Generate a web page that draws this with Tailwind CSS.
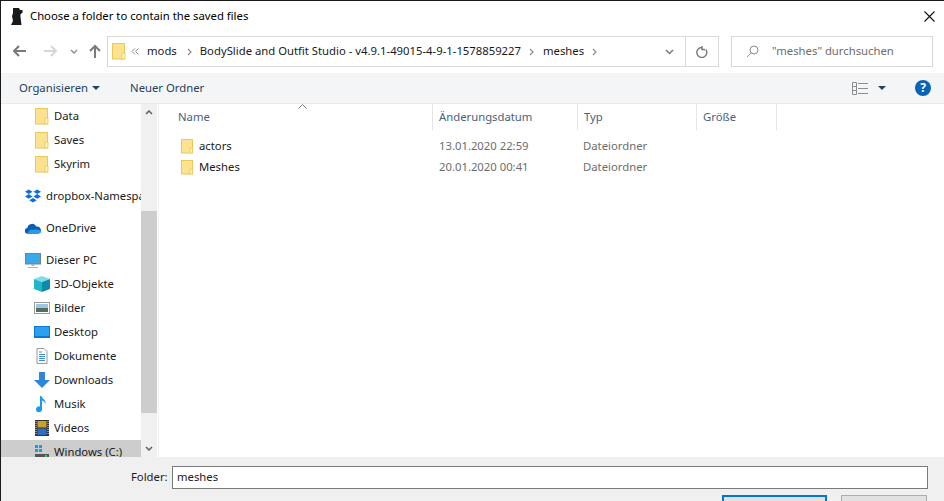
<!DOCTYPE html>
<html lang="de">
<head>
  <meta charset="UTF-8" />
  <title>Choose a folder</title>
  <script src="https://cdn.jsdelivr.net/npm/@tailwindcss/browser@4"></script>
</head>
<body class="w-[944px] h-[501px] overflow-hidden bg-white">
  <div class="w-[944px] h-[501px] flex flex-col overflow-hidden border-t border-l border-[#1a1a1a] text-[11.3px] text-[#1a1a1a] font-['Noto_Sans','Open_Sans',sans-serif]">

    <!-- TITLE BAR -->
    <div class="h-[31px] shrink-0 flex items-center pl-[10px] pr-[8px] pb-[1px]">
      <svg width="12" height="17" viewBox="0 0 12 17" class="shrink-0"><path d="M2 0h6l1 2h2.500v3L9.500 6v3l1 8H0l2-4-1-5 1-3z" fill="#1a1a1a"/></svg>
      <span class="ml-[7px] text-[#000]">Choose a folder to contain the saved files</span>
      <svg width="11" height="11" viewBox="0 0 11 11" class="ml-auto mr-[1px]"><path d="M.5.500l10 10M10.500.500l-10 10" stroke="#111" stroke-width="1.100"/></svg>
    </div>

    <!-- ADDRESS ROW -->
    <div class="h-[41px] shrink-0 flex items-start pt-[4px] bg-white">
      <div class="w-[106px] h-[30px] shrink-0 flex items-center">
        <svg width="14" height="12" viewBox="0 0 14 12" class="ml-[12px]"><path d="M1 6h12M6 1L1 6l5 5" fill="none" stroke="#7a7a7a" stroke-width="2"/></svg>
        <svg width="14" height="12" viewBox="0 0 14 12" class="ml-[16px]"><path d="M13 6H1M8 1l5 5-5 5" fill="none" stroke="#d6d6d6" stroke-width="2"/></svg>
        <svg width="8" height="5" viewBox="0 0 8 5" class="ml-[13px]"><path d="M1 1l3 3 3-3" fill="none" stroke="#8a8a8a" stroke-width="1.300"/></svg>
        <svg width="12" height="14" viewBox="0 0 12 14" class="ml-[11px]"><path d="M6 14V2M1 7l5-5 5 5" fill="none" stroke="#7a7a7a" stroke-width="2"/></svg>
      </div>
      <div class="w-[612px] h-[31px] shrink-0 flex items-center border border-[#d9d9d9]">
        <svg width="14" height="17" viewBox="0 0 14 17" class="ml-[4px] shrink-0"><rect x=".5" y=".5" width="12" height="15.500" fill="#fde28f" stroke="#eac85a"/><rect x="10" y="10" width="3" height="6" fill="#fff3c4" stroke="#eac85a" stroke-width=".8"/></svg>
        <svg width="8" height="7" viewBox="0 0 8 7" class="ml-[5px] shrink-0"><path d="M4 .5L1 3.500l3 3M7.500 .5l-3 3 3 3" fill="none" stroke="#8a8a8a"/></svg>
        <span class="ml-[8px]">mods</span>
        <svg width="5" height="8" viewBox="0 0 5 8" class="ml-[10px]"><path d="M1 1l3 3-3 3" fill="none" stroke="#8a8a8a" stroke-width="1.200"/></svg>
        <span class="ml-[8px] whitespace-nowrap">BodySlide and Outfit Studio - v4.9.1-49015-4-9-1-1578859227</span>
        <svg width="5" height="8" viewBox="0 0 5 8" class="ml-[8px]"><path d="M1 1l3 3-3 3" fill="none" stroke="#8a8a8a" stroke-width="1.200"/></svg>
        <span class="ml-[9px]">meshes</span>
        <svg width="5" height="8" viewBox="0 0 5 8" class="ml-[8px]"><path d="M1 1l3 3-3 3" fill="none" stroke="#8a8a8a" stroke-width="1.200"/></svg>
        <div class="ml-auto w-[33px] h-full flex items-center justify-start">
          <svg width="9" height="6" viewBox="0 0 9 6" class="ml-[13px]"><path d="M1 1l3.500 3.500L8 1" fill="none" stroke="#7a7a7a" stroke-width="1.500"/></svg>
        </div>
        <div class="w-[33px] h-full shrink-0 border-l border-[#d9d9d9] flex items-center justify-center">
          <svg width="12" height="12" viewBox="0 0 12 12"><path d="M9.800 3.500A5 5 0 1 1 6 1.500M6 0v3.500l3 0" fill="none" stroke="#7a7a7a" stroke-width="1.400"/></svg>
        </div>
      </div>
      <div class="ml-[12px] w-[202px] h-[31px] shrink-0 flex items-center border border-[#d9d9d9]">
        <svg width="13" height="13" viewBox="0 0 13 13" class="ml-[14px]"><circle cx="8" cy="5" r="4" fill="none" stroke="#8a8a8a"/><path d="M5 8l-4 4" stroke="#b09090"/></svg>
        <span class="ml-[13px] text-[#6d6d6d] whitespace-nowrap">"meshes" durchsuchen</span>
      </div>
    </div>

    <!-- TOOLBAR -->
    <div class="h-[31px] shrink-0 flex items-center bg-[#f4f5f7] border-b border-[#e8eaec] text-[#26405f]">
      <span class="ml-[18px]">Organisieren</span>
      <svg width="8" height="4" viewBox="0 0 8 4" class="ml-[4px]"><path d="M0 0h8L4 4z" fill="#26405f"/></svg>
      <span class="ml-[30px]">Neuer Ordner</span>
      <svg width="16" height="13" viewBox="0 0 16 13" class="ml-auto"><path d="M.5.500h4v12h-4zM.5 4.500h4M.5 8.500h4M6 1.500h10M6 6.500h10M6 11.500h10" fill="none" stroke="#8e8e8e"/></svg>
      <svg width="8" height="4" viewBox="0 0 8 4" class="ml-[10px]"><path d="M0 0h8L4 4z" fill="#26405f"/></svg>
      <div class="ml-[29px] mr-[13px] w-[16px] h-[16px] rounded-full bg-[#0a63b8] flex items-center justify-center text-white text-[12px] font-bold leading-none">?</div>
    </div>

    <!-- BODY -->
    <div class="h-[353px] shrink-0 flex overflow-hidden">

      <!-- SIDEBAR -->
      <div class="w-[140px] shrink-0 overflow-hidden flex flex-col">
        <div class="h-[24px] shrink-0 flex items-center pl-[34px]">
          <svg width="14" height="17" viewBox="0 0 14 17"><rect x=".5" y=".5" width="12" height="15.500" fill="#fde28f" stroke="#eac85a"/><rect x="10" y="10" width="3" height="6" fill="#fff3c4" stroke="#eac85a" stroke-width=".8"/></svg>
          <span class="ml-[5px]">Data</span>
        </div>
        <div class="h-[24px] shrink-0 flex items-center pl-[34px]">
          <svg width="14" height="17" viewBox="0 0 14 17"><rect x=".5" y=".5" width="12" height="15.500" fill="#fde28f" stroke="#eac85a"/><rect x="10" y="10" width="3" height="6" fill="#fff3c4" stroke="#eac85a" stroke-width=".8"/></svg>
          <span class="ml-[5px]">Saves</span>
        </div>
        <div class="h-[24px] shrink-0 flex items-center pl-[34px]">
          <svg width="14" height="17" viewBox="0 0 14 17"><rect x=".5" y=".5" width="12" height="15.500" fill="#fde28f" stroke="#eac85a"/><rect x="10" y="10" width="3" height="6" fill="#fff3c4" stroke="#eac85a" stroke-width=".8"/></svg>
          <span class="ml-[5px]">Skyrim</span>
        </div>
        <div class="h-[24px] shrink-0 mt-[8px] flex items-center pl-[24px]">
          <svg width="16" height="14" viewBox="0 0 17 14" class="shrink-0"><path d="M4 0l4 2.500L4 5 0 2.500zM13 0l4 2.500L13 5 9 2.500zM4 5l4 2.500L4 10 0 7.500zM13 5l4 2.500L13 10 9 7.500zM8.500 9l4 2.500-4 2.500-4-2.500z" fill="#0f6fe0"/></svg>
          <span class="ml-[5px] whitespace-nowrap">dropbox-Namespace</span>
        </div>
        <div class="h-[24px] shrink-0 mt-[8px] flex items-center pl-[24px]">
          <svg width="16" height="11" viewBox="0 0 17 11" class="shrink-0"><path d="M3 11a3 3 0 0 1-.5-6A5 5 0 0 1 12 3.500 3.800 3.800 0 0 1 14 11z" fill="#0a5fb4"/><path d="M3 11c0-3 3-5 6-4 2-1 8 0 8 2 0 1-1 2-3 2z" fill="#2a9be6"/></svg>
          <span class="ml-[5px]">OneDrive</span>
        </div>
        <div class="h-[24px] shrink-0 mt-[8px] flex items-center pl-[24px]">
          <svg width="16" height="15" viewBox="0 0 16 15" class="shrink-0"><rect x=".5" y=".5" width="15" height="10.500" fill="#39a9ea" stroke="#6c8296"/><path d="M6.500 11h3v2h-3zM3 14h10v1H3z" fill="#a7b2bc"/></svg>
          <span class="ml-[5px]">Dieser PC</span>
        </div>
        <div class="h-[24px] shrink-0 flex items-center pl-[33px]">
          <svg width="16" height="16" viewBox="0 0 16 16" class="shrink-0"><path d="M8 0l8 3-8 3-8-3z" fill="#7fdde2"/><path d="M0 3l8 3v10l-8-3z" fill="#22b5c9"/><path d="M16 3L8 6v10l8-3z" fill="#0c8aa8"/></svg>
          <span class="ml-[4px]">3D-Objekte</span>
        </div>
        <div class="h-[24px] shrink-0 flex items-center pl-[33px]">
          <svg width="16" height="12" viewBox="0 0 16 12" class="shrink-0"><rect x=".5" y=".5" width="15" height="11" fill="#fff" stroke="#9a9a9a"/><rect x="2" y="2" width="12" height="4" fill="#9fc6e0"/><rect x="2" y="6" width="12" height="4" fill="#566f5c"/></svg>
          <span class="ml-[4px]">Bilder</span>
        </div>
        <div class="h-[24px] shrink-0 flex items-center pl-[33px]">
          <svg width="16" height="12" viewBox="0 0 16 12" class="shrink-0"><rect width="16" height="12" fill="#0a78d4"/><rect x="1" y="1" width="14" height="9" fill="#2aa0ee"/></svg>
          <span class="ml-[4px]">Desktop</span>
        </div>
        <div class="h-[24px] shrink-0 flex items-center pl-[33px]">
          <svg width="16" height="16" viewBox="0 0 16 16" class="shrink-0"><path d="M3 .5h7l3 3v12H3z" fill="#fff" stroke="#9a9a9a"/><path d="M5 4h3M5 6.500h6M5 8.500h6M5 10.500h6M5 12.500h6" stroke="#3a8fd0"/></svg>
          <span class="ml-[4px]">Dokumente</span>
        </div>
        <div class="h-[24px] shrink-0 flex items-center pl-[33px]">
          <svg width="16" height="16" viewBox="0 0 16 16" class="shrink-0"><path d="M5 0h6v8h5l-8 8-8-8h5z" fill="#2f86d8"/></svg>
          <span class="ml-[4px]">Downloads</span>
        </div>
        <div class="h-[24px] shrink-0 flex items-center pl-[33px]">
          <svg width="16" height="16" viewBox="0 0 16 16" class="shrink-0"><path d="M6 0h1.500c.5 3 5 4 4 8-.5-2-2-3-3.500-3.500V13a3 3 0 1 1-2-2.500z" fill="#1a9be8"/></svg>
          <span class="ml-[4px]">Musik</span>
        </div>
        <div class="h-[24px] shrink-0 flex items-center pl-[33px]">
          <svg width="16" height="16" viewBox="0 0 16 16" class="shrink-0"><rect x="1" width="14" height="16" fill="#333"/><rect x="3.500" y="1" width="9" height="6.500" fill="#c9a227"/><rect x="3.500" y="8.500" width="9" height="6.500" fill="#2a6fc4"/><path d="M2 1v14M14 1v14" stroke="#ddd" stroke-dasharray="1 1"/></svg>
          <span class="ml-[4px]">Videos</span>
        </div>
        <div class="h-[24px] shrink-0 flex items-center pl-[33px] bg-[#cdcdcd]">
          <svg width="16" height="16" viewBox="0 0 16 16" class="shrink-0"><rect x="1" y="1" width="3" height="3" fill="#1a9be8"/><rect x="5" y="1" width="3" height="3" fill="#1a9be8"/><rect x="1" y="5" width="3" height="3" fill="#1a9be8"/><rect x="5" y="5" width="3" height="3" fill="#1a9be8"/><rect x="1" y="10" width="14" height="5" fill="#555"/><rect x="11" y="11" width="2" height="2" fill="#3fd060"/></svg>
          <span class="ml-[4px]">Windows (C:)</span>
        </div>
      </div>

      <!-- SCROLLBAR -->
      <div class="w-[16px] shrink-0 bg-[#f0f0f0] flex flex-col items-center">
        <div class="h-[17px] shrink-0 flex items-center justify-center">
          <svg width="8" height="5" viewBox="0 0 8 5"><path d="M1 4l3-3 3 3" fill="none" stroke="#606060" stroke-width="1.500"/></svg>
        </div>
        <div class="mt-[90px] w-full h-[202px] shrink-0 bg-[#cdcdcd]"></div>
        <div class="mt-auto h-[17px] shrink-0 flex items-center justify-center">
          <svg width="8" height="5" viewBox="0 0 8 5"><path d="M1 1l3 3 3-3" fill="none" stroke="#606060" stroke-width="1.500"/></svg>
        </div>
      </div>

      <!-- FILE LIST -->
      <div class="relative ml-[1px] flex-1 border-l border-[#f0f0f0] flex flex-col">
        <svg width="9" height="5" viewBox="0 0 9 5" class="absolute left-[139px] top-[0px]"><path d="M.5 4.500l4-4 4 4" fill="none" stroke="#7a7a7a"/></svg>
        <div class="h-[26px] shrink-0 flex text-[#4c607a]">
          <div class="w-[274px] shrink-0 border-r border-[#e5e5e5] pl-[19px] flex items-center">Name</div>
          <div class="w-[145px] shrink-0 border-r border-[#e5e5e5] pl-[6px] flex items-center">Änderungsdatum</div>
          <div class="w-[119px] shrink-0 border-r border-[#e5e5e5] pl-[6px] flex items-center">Typ</div>
          <div class="w-[80px] shrink-0 border-r border-[#e5e5e5] pl-[6px] flex items-center">Größe</div>
        </div>
        <div class="mt-[6px] h-[21px] shrink-0 flex items-center">
          <div class="w-[274px] shrink-0 flex items-center pl-[22px]">
            <svg width="12" height="15" viewBox="0 0 12 15"><rect x=".5" y=".5" width="11" height="13.500" fill="#fde28f" stroke="#eac85a"/><rect x="9" y="9" width="2.500" height="5" fill="#fff3c4" stroke="#eac85a" stroke-width=".8"/></svg>
            <span class="ml-[6px]">actors</span>
          </div>
          <div class="w-[145px] shrink-0 pl-[6px] text-[#6d6d6d]">13.01.2020 22:59</div>
          <div class="pl-[5px] text-[#6d6d6d]">Dateiordner</div>
        </div>
        <div class="h-[21px] shrink-0 flex items-center">
          <div class="w-[274px] shrink-0 flex items-center pl-[22px]">
            <svg width="12" height="15" viewBox="0 0 12 15"><rect x=".5" y=".5" width="11" height="13.500" fill="#fde28f" stroke="#eac85a"/><rect x="9" y="9" width="2.500" height="5" fill="#fff3c4" stroke="#eac85a" stroke-width=".8"/></svg>
            <span class="ml-[6px]">Meshes</span>
          </div>
          <div class="w-[145px] shrink-0 pl-[6px] text-[#6d6d6d]">20.01.2020 00:41</div>
          <div class="pl-[5px] text-[#6d6d6d]">Dateiordner</div>
        </div>
      </div>
    </div>

    <!-- BOTTOM PANEL -->
    <div class="flex-1 bg-[#f0f0f0] flex flex-col">
      <div class="flex items-center mt-[9px] pl-[130px]">
        <span class="w-[41px]">Folder:</span>
        <div class="w-[756px] h-[23px] bg-white border border-[#7a7a7a] flex items-center pl-[4px]">meshes</div>
      </div>
      <div class="flex mt-[6px] pl-[721px]">
        <div class="w-[105px] h-[20px] bg-[#e1e1e1] border-2 border-[#0078d7]"></div>
        <div class="ml-[14px] w-[86px] h-[20px] bg-[#e1e1e1] border border-[#adadad]"></div>
      </div>
    </div>
  </div>
</body>
</html>
